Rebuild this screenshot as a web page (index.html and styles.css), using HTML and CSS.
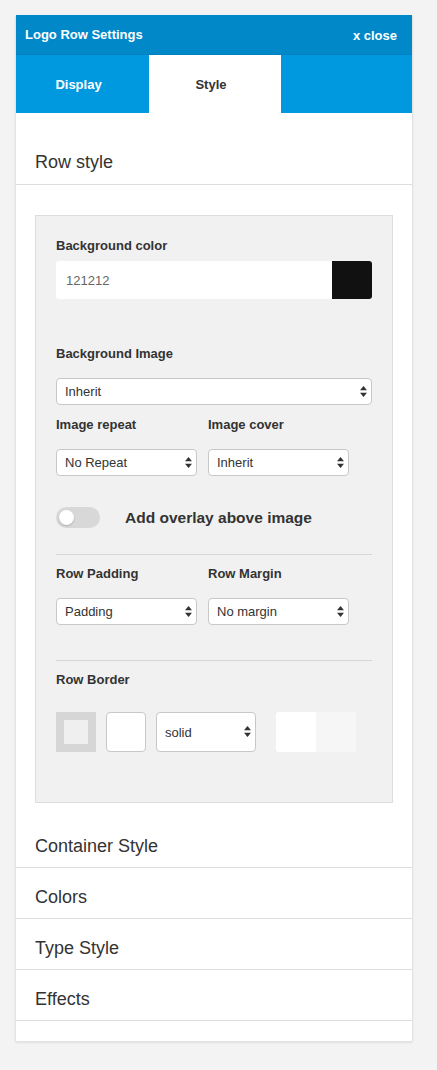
FILE: index.html
```html
<!DOCTYPE html>
<html lang="en">

<head>
  <meta charset="UTF-8">
  <title>Logo Row Settings</title>
  <link rel="stylesheet" href="styles.css">
</head>

<body>
  <div class="panel">
    <div class="panel-header">
      <span class="panel-title">Logo Row Settings</span>
      <a href="#" class="panel-close">x close</a>
    </div>

    <div class="tabs">
      <div class="tab">Display</div>
      <div class="tab active">Style</div>
      <div class="tab"></div>
    </div>

    <div class="section-title first">Row style</div>

    <div class="section-body">
      <div class="settings-box">
        <label class="field-label">Background color</label>
        <div class="color-input">
          <input type="text" value="121212">
          <span class="swatch"></span>
        </div>

        <label class="field-label bg-image">Background Image</label>
        <div class="select-wrap">
          <select><option>Inherit</option></select>
          <svg class="arrows" width="7" height="11" viewBox="0 0 7 11"><path d="M3.5 0L7 4.2H0z M3.5 11L0 6.8h7z" fill="#333"/></svg>
        </div>

        <div class="two-col">
          <div>
            <label class="field-label">Image repeat</label>
            <div class="select-wrap">
              <select><option>No Repeat</option></select>
              <svg class="arrows" width="7" height="11" viewBox="0 0 7 11"><path d="M3.5 0L7 4.2H0z M3.5 11L0 6.8h7z" fill="#333"/></svg>
            </div>
          </div>
          <div>
            <label class="field-label">Image cover</label>
            <div class="select-wrap">
              <select><option>Inherit</option></select>
              <svg class="arrows" width="7" height="11" viewBox="0 0 7 11"><path d="M3.5 0L7 4.2H0z M3.5 11L0 6.8h7z" fill="#333"/></svg>
            </div>
          </div>
        </div>

        <div class="overlay-row">
          <span class="toggle"><span class="knob"></span></span>
          <span class="overlay-label">Add overlay above image</span>
        </div>

        <hr class="divider">

        <div class="two-col">
          <div>
            <label class="field-label">Row Padding</label>
            <div class="select-wrap">
              <select><option>Padding</option></select>
              <svg class="arrows" width="7" height="11" viewBox="0 0 7 11"><path d="M3.5 0L7 4.2H0z M3.5 11L0 6.8h7z" fill="#333"/></svg>
            </div>
          </div>
          <div>
            <label class="field-label">Row Margin</label>
            <div class="select-wrap">
              <select><option>No margin</option></select>
              <svg class="arrows" width="7" height="11" viewBox="0 0 7 11"><path d="M3.5 0L7 4.2H0z M3.5 11L0 6.8h7z" fill="#333"/></svg>
            </div>
          </div>
        </div>

        <hr class="divider second">

        <label class="field-label">Row Border</label>
        <div class="border-row">
          <span class="border-preview"></span>
          <span class="border-width"></span>
          <div class="select-wrap border-style">
            <select><option>solid</option></select>
            <svg class="arrows" width="7" height="11" viewBox="0 0 7 11"><path d="M3.5 0L7 4.2H0z M3.5 11L0 6.8h7z" fill="#333"/></svg>
          </div>
          <span class="border-color">
            <span class="half white"></span>
            <span class="half light"></span>
          </span>
        </div>
      </div>
    </div>

    <div class="section-title">Container Style</div>
    <div class="section-title">Colors</div>
    <div class="section-title">Type Style</div>
    <div class="section-title">Effects</div>
  </div>
</body>

</html>
```

FILE: styles.css
```css
:root {
  --header-blue: #0088c8;
  --tab-blue: #0099e0;
  --border-color: #dddddd;
  --box-bg: #f1f1f1;
  --text-color: #333;
}

body {
  margin: 0;
  padding: 15px 24px 15px 15px;
  background-color: #f3f3f3;
  font-family: "Liberation Sans", Arial, Helvetica, sans-serif;
  color: var(--text-color);
}

.panel {
  width: 398px;
  box-sizing: border-box;
  background-color: #fff;
  border: 1px solid #e2e2e2;
  border-top: none;
  border-radius: 2px;
  box-shadow: 0 1px 2px rgba(0, 0, 0, 0.08);
  padding-bottom: 20px;
}

.panel-header {
  display: flex;
  justify-content: space-between;
  align-items: center;
  height: 39px;
  padding: 0 15px 0 9px;
  background-color: var(--header-blue);
  border-bottom: 1px solid #0082c0;
  color: #fff;
  font-size: 13px;
  font-weight: bold;
}

.panel-close {
  color: #fff;
  text-decoration: none;
  padding-top: 2px;
}

.tabs {
  display: grid;
  grid-template-columns: 133px 132px 1fr;
  height: 58px;
  background-color: var(--tab-blue);
}

.tab {
  display: flex;
  align-items: center;
  justify-content: center;
  padding-right: 8px;
  color: #fff;
  font-size: 13px;
  font-weight: bold;
}

.tab.active {
  background-color: #fff;
  color: var(--text-color);
}

.section-title {
  padding: 18px 19px 10px;
  font-size: 18px;
  line-height: 22px;
  border-bottom: 1px solid var(--border-color);
}

.section-title.first {
  padding-top: 38px;
  padding-bottom: 11px;
}

.section-body {
  padding: 30px 19px 14px;
}

.settings-box {
  background-color: var(--box-bg);
  border: 1px solid var(--border-color);
  padding: 21px 20px 50px;
}

.field-label {
  display: block;
  font-size: 13px;
  font-weight: bold;
  line-height: 18px;
  margin-bottom: 15px;
}

.color-input {
  display: flex;
  height: 38px;
  margin-top: -9px;
}

.color-input input {
  flex-grow: 1;
  border: none;
  border-radius: 3px 0 0 3px;
  background-color: #fff;
  padding: 0 10px;
  font-family: inherit;
  font-size: 13px;
  color: #666;
  outline: none;
}

.swatch {
  width: 40px;
  background-color: #111;
  border-radius: 0 3px 3px 0;
}

.field-label.bg-image {
  margin-top: 46px;
}

.select-wrap {
  position: relative;
}

.select-wrap select {
  display: block;
  width: 100%;
  height: 27px;
  padding: 0 8px;
  border: 1px solid #c8c8c8;
  border-radius: 4px;
  background-color: #fff;
  font-family: inherit;
  font-size: 13px;
  color: var(--text-color);
  appearance: none;
  -webkit-appearance: none;
}

.select-wrap .arrows {
  position: absolute;
  right: 5px;
  top: 8px;
}

.two-col {
  display: grid;
  grid-template-columns: 141px 141px;
  gap: 11px;
  margin-top: 11px;
}

.overlay-row {
  display: flex;
  align-items: center;
  gap: 25px;
  margin-top: 31px;
}

.toggle {
  display: flex;
  align-items: center;
  width: 44px;
  height: 21px;
  padding: 0 3px;
  box-sizing: border-box;
  border-radius: 11px;
  background-color: #d8d8d8;
}

.knob {
  width: 15px;
  height: 15px;
  border-radius: 50%;
  background-color: #fff;
  box-shadow: 0 1px 2px rgba(0, 0, 0, 0.2);
}

.overlay-label {
  font-size: 15.5px;
  font-weight: bold;
}

.divider {
  border: none;
  border-top: 1px solid #d6d6d6;
  margin: 26px 0 0;
}

.divider + .two-col {
  margin-top: 10px;
}

.divider.second {
  margin-top: 35px;
  margin-bottom: 10px;
}

.divider.second + .field-label {
  margin-bottom: 0;
}

.border-row {
  display: flex;
  align-items: center;
  margin-top: 23px;
}

.border-preview {
  width: 40px;
  height: 40px;
  box-sizing: border-box;
  border: 8px solid #d6d6d6;
  background-color: #efefef;
}

.border-width {
  width: 40px;
  height: 40px;
  box-sizing: border-box;
  margin-left: 10px;
  border: 1px solid #c8c8c8;
  border-radius: 4px;
  background-color: #fff;
}

.border-style {
  width: 100px;
  margin-left: 10px;
}

.border-style select {
  height: 40px;
}

.border-style .arrows {
  top: 14px;
}

.border-color {
  display: flex;
  margin-left: 20px;
  border-radius: 3px;
  overflow: hidden;
}

.half {
  width: 40px;
  height: 40px;
}

.half.white {
  background-color: #fff;
}

.half.light {
  background-color: #f6f6f6;
}
```
